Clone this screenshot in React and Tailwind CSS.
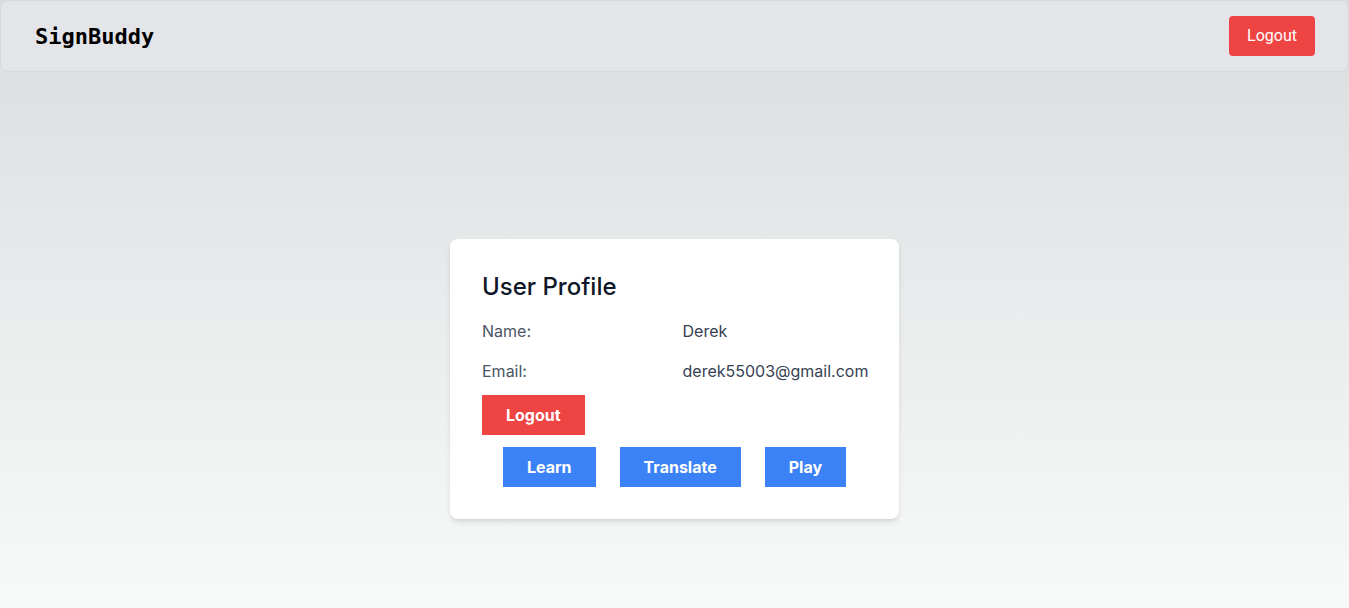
export default function App() {
  return (
    <div className="min-h-[608px] flex flex-col bg-gradient-to-b from-[#dadddf] to-[#f8faf9]" style={{ fontFamily: "Inter, sans-serif" }}>
      <header className="flex items-center justify-between pl-[34px] pr-[33px] py-[15px] bg-[#e4e5e9] border border-[#d6d8dc] rounded-lg">
        <div className="text-[22px] font-bold text-black" style={{ fontFamily: "'DejaVu Sans Mono', monospace" }}>SignBuddy</div>
        <button className="h-10 px-[18px] rounded bg-[#ef4444] text-white text-[16px]" style={{ fontFamily: "Roboto, sans-serif" }}>Logout</button>
      </header>
      <main className="flex-1 flex justify-center pt-[167px]">
        <div className="w-[449px] h-fit bg-white rounded-lg shadow-md p-8">
          <h2 className="text-2xl font-medium text-gray-900 mb-4">User Profile</h2>
          <div className="grid grid-cols-2 gap-x-4 gap-y-4 text-base">
            <div className="text-gray-600">Name:</div>
            <div className="text-gray-700">Derek</div>
            <div className="text-gray-600">Email:</div>
            <div className="text-gray-700">derek55003@gmail.com</div>
          </div>
          <button className="mt-3 h-10 px-6 bg-[#ef4444] text-white font-bold">Logout</button>
          <div className="mt-3 flex justify-center gap-6">
            <button className="h-10 px-6 bg-[#3b82f6] text-white font-bold">Learn</button>
            <button className="h-10 px-6 bg-[#3b82f6] text-white font-bold">Translate</button>
            <button className="h-10 px-6 bg-[#3b82f6] text-white font-bold">Play</button>
          </div>
        </div>
      </main>
    </div>
  );
}
